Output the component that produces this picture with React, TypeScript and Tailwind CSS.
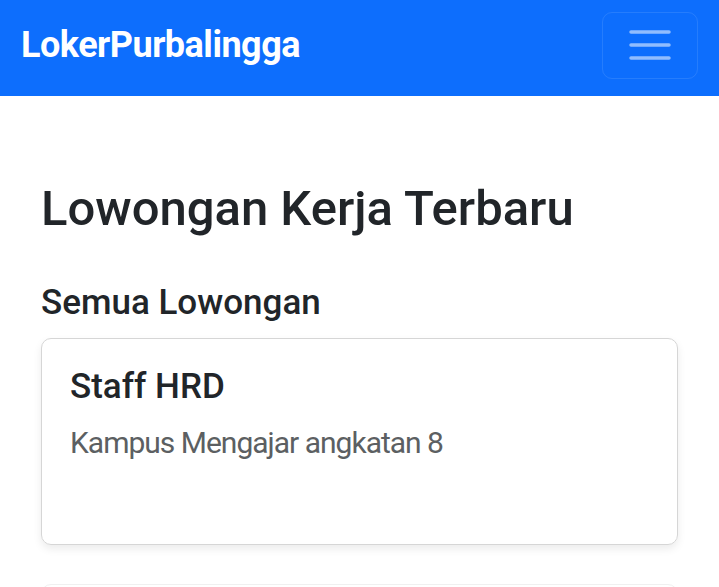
export default function App() {
  return (
    <div className="min-h-screen bg-white font-['Roboto',sans-serif] text-[#212529]">
      <nav className="flex h-[96px] items-center justify-between bg-[#0d6efd] px-[21px] pb-[6px]">
        <a className="text-[36px] font-bold leading-none tracking-[-0.5px] text-white">LokerPurbalingga</a>
        <button className="flex h-[67px] w-[96px] items-center justify-center rounded-[10px] border border-white/10">
          <svg width="42" height="32" viewBox="0 0 42 32" fill="none">
            <path d="M2 3h38M2 16h38M2 29h38" stroke="rgba(255,255,255,0.55)" strokeWidth="3.5" strokeLinecap="round" />
          </svg>
        </button>
      </nav>

      <main className="px-[41px] pt-[84px]">
        <h1 className="text-[49px] font-medium leading-[1.2]">Lowongan Kerja Terbaru</h1>
        <h2 className="mt-[43px] text-[35px] font-medium leading-[1.2]">Semua Lowongan</h2>

        <div className="mt-[14px] flex flex-col gap-[39px]">
          <div className="h-[207px] rounded-[10px] border border-[#d6d6d6] px-[28px] pt-[27px] shadow-[0_4px_8px_rgba(0,0,0,0.08)]">
            <h5 className="text-[35px] font-medium leading-[1.2]">Staff HRD</h5>
            <p className="mt-[12px] text-[30px] leading-[1.5] tracking-[-1px] text-[#5c5f62]">Kampus Mengajar angkatan 8</p>
          </div>
          <div className="h-[207px] rounded-[10px] border border-[#f0f0f0]" />
        </div>
      </main>
    </div>
  );
}
